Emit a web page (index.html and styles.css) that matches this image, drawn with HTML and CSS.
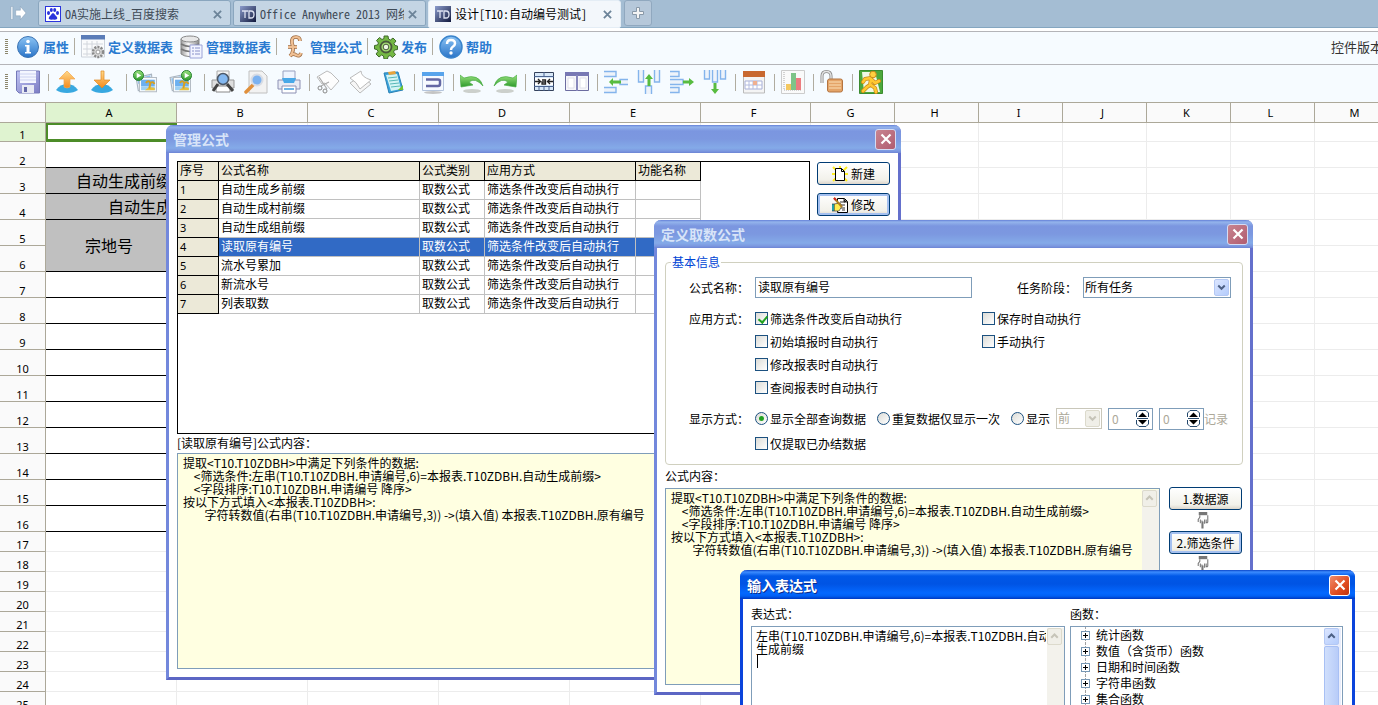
FILE: index.html
```html
<!DOCTYPE html>
<html lang="zh-CN">
<head>
<meta charset="utf-8">
<title>设计[T10:自动编号测试]</title>
<link rel="stylesheet" href="styles.css">
</head>
<body>
<svg class="defs" aria-hidden="true">
  <defs>
    <linearGradient id="blue" x1="0" y1="0" x2="0" y2="1"><stop offset="0" stop-color="#8cc4f4"/><stop offset="1" stop-color="#2a74c8"/></linearGradient>
    <linearGradient id="orange" x1="0" y1="0" x2="0" y2="1"><stop offset="0" stop-color="#ffd98a"/><stop offset="1" stop-color="#f58a1c"/></linearGradient>
    <linearGradient id="green" x1="0" y1="0" x2="0" y2="1"><stop offset="0" stop-color="#9ae27e"/><stop offset="1" stop-color="#2c9a2c"/></linearGradient>
    <linearGradient id="grey" x1="0" y1="0" x2="1" y2="0"><stop offset="0" stop-color="#9a9a9a"/><stop offset=".4" stop-color="#fafafa"/><stop offset="1" stop-color="#8a8a8a"/></linearGradient>
    <linearGradient id="violet" x1="0" y1="0" x2="1" y2="1"><stop offset="0" stop-color="#c0c4f2"/><stop offset="1" stop-color="#7c7cc4"/></linearGradient>
    <linearGradient id="navy" x1="0" y1="0" x2="1" y2="1"><stop offset="0" stop-color="#8c9ccc"/><stop offset="1" stop-color="#10183c"/></linearGradient>
  </defs>
  <symbol id="td" viewBox="0 0 16 16"><rect width="16" height="16" fill="url(#navy)"/><path d="M2 5h6M5 5v7M9 5v7h2q3 0 3-3.500t-3-3.500z" fill="none" stroke="#dde2f2" stroke-width="1.300"/></symbol>
  <symbol id="photo" viewBox="0 0 20 18"><path d="M1 4L15 1l1 12-13 3z" fill="#eef2f6" stroke="#a8b4c0"/><path d="M2 5l12-3v8H3z" fill="#8cc0f0"/><path d="M4 4h15.500v13H4z" fill="#fafcfe" stroke="#b4bcc4"/><path d="M5.500 6h12.500v6H5.500z" fill="#6cb0f0"/><path d="M5.500 12h12.500v3.500H5.500z" fill="#9cd0f4"/><path d="M9 15.500q4-4 9-2v2z" fill="#e8c040"/><path d="M13 14l1-5M10 9q2-3 4 0 3-2 3.500 1" fill="none" stroke="#d8a020" stroke-width="1.800"/></symbol>
  <symbol id="play" viewBox="0 0 12 12"><circle cx="6" cy="6" r="5.500" fill="url(#green)" stroke="#1c7c28"/><path d="M4 3l5 3-5 3z" fill="#fff"/></symbol>
  <symbol id="hand" viewBox="0 0 10 16"><path d="M1 0h8v3H1z" fill="#777"/><path d="M2 3v2L.500 7v2.500M2.500 7v3.500M4 8v7h1V9M6.500 7v4M8 7v3.500M9.500 3v6.500l-1 1" fill="none" stroke="#777"/></symbol>
</svg>

<header class="tabbar">
  <button class="pin" aria-label="展开"><svg viewBox="0 0 18 14"><path d="M1 0h2v14H1zM6 4h5V0l6 7-6 7v-4H6z" fill="#fff" stroke="#88a2ba" stroke-width=".600"/></svg></button>
  <div class="tab">
    <svg class="fav" viewBox="0 0 16 16"><path fill="#2a34dc" d="M0 0h16v16H0z"/><path fill="#fff" d="M1 1h14v14H1z"/><g fill="#2a34dc"><ellipse cx="3.500" cy="7" rx="1.500" ry="2"/><ellipse cx="6.300" cy="4" rx="1.500" ry="2"/><ellipse cx="9.700" cy="4" rx="1.500" ry="2"/><ellipse cx="12.500" cy="7" rx="1.500" ry="2"/><path d="M8 7q1 0 2.500 2.500 2.500 2 1.500 3.500-1.500 1-4 .500-2.500.500-4-.500-1-1.500 1.500-3.500Q7 7 8 7"/></g></svg>
    <span class="caption">OA实施上线_百度搜索</span><button class="tabx" aria-label="关闭"><svg viewBox="0 0 10 10"><path d="M1 1l8 8M9 1l-8 8"/></svg></button>
  </div>
  <div class="tab">
    <svg class="fav"><use href="#td"/></svg>
    <span class="caption">Office Anywhere 2013 网络</span><button class="tabx" aria-label="关闭"><svg viewBox="0 0 10 10"><path d="M1 1l8 8M9 1l-8 8"/></svg></button>
  </div>
  <div class="tab active">
    <svg class="fav"><use href="#td"/></svg>
    <span class="caption">设计[T10:自动编号测试]</span><button class="tabx" aria-label="关闭"><svg viewBox="0 0 10 10"><path d="M1 1l8 8M9 1l-8 8"/></svg></button>
  </div>
  <button class="newtab" aria-label="新标签"><svg viewBox="0 0 12 12"><path d="M4.500.500h3v4h4v3h-4v4h-3v-4h-4v-3h4z" fill="#f4f4f4" stroke="#8898a8"/></svg></button>
</header>

<nav class="menu">
  <i class="grip"></i>
  <button class="item"><svg viewBox="0 0 24 24"><circle cx="12" cy="12" r="10.500" fill="url(#blue)" stroke="#3c74b4"/><circle cx="12" cy="6.500" r="1.800" fill="#fff"/><path d="M9 10h4.500v7H15v1.500H9V17h1.500v-5.500H9z" fill="#fff"/></svg>属性</button>
  <i class="sep"></i>
  <button class="item"><svg viewBox="0 0 24 24"><path d="M.500 1h23v21H.500z" fill="#fafbfc" stroke="#ccd2da"/><path d="M0 0h24v4.500H0z" fill="#5a7cb8"/><path d="M2 9h20M2 14h20M2 19h20M6 6v15M11 6v15M16 6v15" stroke="#d2d6dc"/><circle cx="17" cy="17" r="5" fill="#d8d8d8" stroke="#8a8a8a" stroke-dasharray="2 1.200" stroke-width="2.500"/><circle cx="17" cy="17" r="2" fill="#fff" stroke="#999"/></svg>定义数据表</button>
  <button class="item wide"><svg viewBox="0 0 24 24"><path d="M2 4v15q7 5 18 0V4z" fill="url(#grey)" stroke="#888"/><ellipse cx="11" cy="4" rx="9" ry="3" fill="#e8e8e8" stroke="#888"/><path d="M2 9q9 5 18 0M2 14q9 5 18 0" fill="none" stroke="#777" stroke-width="1.500"/><path d="M11 10h12v13H11z" fill="#f2f4ff" stroke="#9ca4d8"/><path d="M13 13h2m1 0h5M13 16h2m1 0h5M13 19h2m1 0h5" stroke="#8890c8"/></svg>管理数据表</button>
  <i class="sep"></i>
  <button class="item"><svg viewBox="0 0 24 24"><path d="M17 6q0-4-4-4-5 0-4 6 3 8-2 13 3-3 6-1 4 2 5-2M5 12h9" fill="none" stroke="#9c6a40" stroke-width="3.600"/><path d="M17 6q0-4-4-4-5 0-4 6 3 8-2 13 3-3 6-1 4 2 5-2M5 12h9" fill="none" stroke="#f0c094" stroke-width="2.200"/></svg>管理公式</button>
  <i class="sep"></i>
  <button class="item"><svg viewBox="0 0 24 24"><path d="M10 1h4l.500 3 2 1L19 3l3 3-2 2.500 1 2 2.500.500v3.500l-3 .500-1 2 2 2.500-3 3-2.500-2-2 1-.500 2.500h-3.500l-.500-3-2-1L5 22l-3-3 2-2.500-1-2-2.500-.500v-3.500l3-.500 1-2-2-2.500 3-3 2.500 2 2-1z" fill="#74b844" stroke="#406a2c"/><circle cx="12" cy="12" r="5.500" fill="#a4dc74" stroke="#4a5a3c" stroke-width="1.800"/><circle cx="12" cy="12" r="2.800" fill="#eef8e4" stroke="#4a5a3c"/></svg>发布</button>
  <i class="sep"></i>
  <button class="item"><svg viewBox="0 0 24 24"><circle cx="12" cy="12" r="11" fill="url(#blue)" stroke="#3a84cc" stroke-width="1.500"/><path d="M8 9q0-4 4-4t4 3.500q0 2-2.500 3.500-1.500 1-1.500 3" fill="none" stroke="#fff" stroke-width="2.500"/><circle cx="12" cy="18" r="1.700" fill="#fff"/></svg>帮助</button>
  <span class="version">控件版本</span>
</nav>

<nav class="tools">
  <i class="grip"></i>
  <button class="tool" aria-label="保存"><svg viewBox="0 0 24 24"><path d="M.500 1h23v22H3L.500 20.500z" fill="url(#violet)" stroke="#7478b8"/><path d="M4 1h16v12H4z" fill="#f4f6ff"/><path d="M4 4h16M4 7h16M4 10h16" stroke="#ccd2f0"/><path d="M6 15h12v8H6z" fill="#e8eaf4"/><path d="M8 17h3v5H8z" fill="#6468a8"/></svg></button>
  <i class="sep"></i>
  <button class="tool broad" aria-label="上传"><svg viewBox="0 0 24 24"><path d="M1 20q4-6 11-6t11 6q-4 3-11 3T1 20" fill="#38a8e0"/><path d="M12 1l8 8h-5v8q-3 2-6 0V9H4z" fill="url(#orange)" stroke="#f0a850" stroke-width=".700"/></svg></button>
  <button class="tool broad" aria-label="下载"><svg viewBox="0 0 24 24"><path d="M1 20q4-6 11-6t11 6q-4 3-11 3T1 20" fill="#38a8e0"/><path d="M11 1h3v9h6l-8 8-8-8h7z" fill="url(#orange)" stroke="#e08a20" stroke-width=".700"/></svg></button>
  <i class="sep"></i>
  <button class="tool broad" aria-label="导入图片"><svg viewBox="0 0 24 24"><use href="#photo" x="2" y="3" width="22" height="20"/><use href="#play" x="0" y="0" width="11" height="11"/></svg></button>
  <button class="tool broad" aria-label="导出图片"><svg viewBox="0 0 24 24"><use href="#photo" x="1" y="3" width="22" height="20"/><use href="#play" x="13" y="0" width="11" height="11"/></svg></button>
  <i class="sep"></i>
  <button class="tool" aria-label="打印预览"><svg viewBox="0 0 24 24"><path d="M6 1h12v9H6z" fill="#f4f4f4" stroke="#aaa"/><path d="M1 10h22v8H1z" fill="#dedede" stroke="#999"/><path d="M5 16h14v6H5z" fill="#fff" stroke="#888"/><path d="M7 14l-5 7M16 14l6 7" stroke="#444" stroke-width="3"/><circle cx="12" cy="9" r="5.500" fill="#84b8f0" stroke="#4c5868" stroke-width="1.500"/></svg></button>
  <button class="tool" aria-label="预览"><svg viewBox="0 0 24 24"><path d="M5 1h13l5 5v17H5z" fill="#f2f2f2" stroke="#c0c0c0"/><path d="M10 14l-8 8" stroke="#e0903c" stroke-width="3.500" stroke-linecap="round"/><circle cx="13" cy="10" r="5.500" fill="#7cb2f0" stroke="#d8dce4" stroke-width="2"/></svg></button>
  <button class="tool" aria-label="打印"><svg viewBox="0 0 24 24"><path d="M6 1h12v9H6z" fill="#eef4ff" stroke="#98a0c0"/><path d="M1 10h22v9H1z" fill="#e8eaf4" stroke="#8c90b4"/><path d="M5 8h14l-2 5H7z" fill="#48a8e8"/><path d="M5 16h14v7H5z" fill="#fff" stroke="#8c90b4"/><path d="M7 19h10" stroke="#6ab4e8" stroke-width="2"/></svg></button>
  <i class="sep"></i>
  <button class="tool" aria-label="剪切"><svg viewBox="0 0 24 24"><path d="M1 7l10-6 4 2 8 8-8 9-6-7-3 1z" fill="#fdfdfd" stroke="#bbb"/><path d="M3 7l8 12M13 12l-8 4" stroke="#aaa" stroke-width="1.200"/><circle cx="4" cy="18" r="2" fill="none" stroke="#888"/><circle cx="9" cy="21" r="2" fill="none" stroke="#888"/></svg></button>
  <button class="tool" aria-label="复制"><svg viewBox="0 0 24 24"><path d="M1 13l11-7 10 8-11 9z" fill="#f6f6f6" stroke="#bbb"/><path d="M1 8l11-7q0 6 10 9l-11 9Q8 12 1 8" fill="#fff" stroke="#bbb"/></svg></button>
  <button class="tool" aria-label="粘贴"><svg viewBox="0 0 24 24"><path d="M2 3l14-1 5 18-14 3z" fill="#3ca4dc" stroke="#2880b4"/><path d="M4 5l11-1 4 15-10 2z" fill="#d4f4f4"/><path d="M6 8l9-1M7 11l9-1M8 14l9-1M9 17l9-1" stroke="#58b8b8"/><path d="M6 2l7-1 1 3-7 1z" fill="#e8a43c"/><path d="M16 20h5v-5z" fill="#70c430"/></svg></button>
  <i class="sep"></i>
  <button class="tool" aria-label="对象"><svg viewBox="0 0 24 24"><ellipse cx="12" cy="22.500" rx="9" ry="1.500" fill="#c4c4c4"/><path d="M1.500 2.500h21v18h-21z" fill="#f6faff" stroke="#b4c4dc"/><path d="M1 2h22v4H1z" fill="#58a4ec"/><path d="M5 9.500h12q2 0 2 1.500v3q0 2-2 2H5" fill="none" stroke="#6468a4" stroke-width="2.500"/></svg></button>
  <i class="sep"></i>
  <button class="tool" aria-label="撤销"><svg viewBox="0 0 24 24"><ellipse cx="12" cy="21" rx="9" ry="2" fill="#ccd0cc"/><path d="M0 5l1 12 12-2-4-3q6-5 14 4Q19 3 4 8z" fill="url(#green)" stroke="#4cae48" stroke-width=".700"/></svg></button>
  <button class="tool" aria-label="重做"><svg viewBox="0 0 24 24"><ellipse cx="12" cy="21" rx="9" ry="2" fill="#ccd0cc"/><path d="M24 5l-1 12-12-2 4-3Q9 7 1 16 5 3 20 8z" fill="url(#green)" stroke="#4cae48" stroke-width=".700"/></svg></button>
  <i class="sep"></i>
  <button class="tool" aria-label="合并单元格"><svg viewBox="0 0 24 24"><path d="M2.500 2.500h19v18h-19z" fill="#d8e8f8" stroke="#35425c"/><path d="M2 6.500h20M2 16.500h20M12 2v4M12 17v4M7 17v4M17 17v4" stroke="#4c6490"/><path d="M3 8h18v7H3z" fill="#fff"/><path d="M3 11.500h5M6 9l2.500 2.500L6 14M21 11.500h-5M18 9l-2.500 2.500L18 14M10 10h3.500v4h-3.500v-2h3" fill="none" stroke="#222" stroke-width="1.300"/></svg></button>
  <button class="tool" aria-label="拆分单元格"><svg viewBox="0 0 24 24"><path d="M.500 2.500h23v18H.500z" fill="#f6f6fa" stroke="#6c6ca0"/><path d="M0 2h24v4H0z" fill="#7878b4"/><path d="M11 5h2v16h-2z" fill="#8888bc"/><path d="M3 8h6v10H3zM15 8h6v10h-6z" fill="#fff" stroke="#e0e0ea"/></svg></button>
  <i class="sep"></i>
  <button class="tool" aria-label="插入行"><svg viewBox="0 0 24 24"><g fill="#eef3fa" stroke="#84b4ec" stroke-width="1.400"><path d="M0 1.500h12v5H0M0 17.500h12v5H0M24 9.500h-8v5h8"/></g><path d="M5 12l4-4v2.500h8v3H9V16z" fill="#58bc40"/></svg></button>
  <button class="tool" aria-label="插入列"><svg viewBox="0 0 24 24"><g fill="#eef3fa" stroke="#84b4ec" stroke-width="1.400"><path d="M1.500 0v12h5V0M17.500 0v12h5V0M8.500 24v-8h6v8"/></g><path d="M12 4l4 5h-2.500v7h-3V9H8z" fill="#58bc40"/></svg></button>
  <button class="tool" aria-label="删除行"><svg viewBox="0 0 24 24"><g fill="#eef3fa" stroke="#84b4ec" stroke-width="1.400"><path d="M0 1.500h9v5H0M0 17.500h9v5H0M0 9.500h13v5H0"/></g><path d="M24 12l-5-4v2.500h-6v3h6V16z" fill="#58bc40"/></svg></button>
  <button class="tool" aria-label="删除列"><svg viewBox="0 0 24 24"><g fill="#eef3fa" stroke="#84b4ec" stroke-width="1.400"><path d="M1.500 0v9h5V0M17.500 0v9h5V0M9.500 0v12h5V0"/></g><path d="M12 24l4-5h-2.500v-6h-3v6H8z" fill="#58bc40"/></svg></button>
  <i class="sep"></i>
  <button class="tool" aria-label="日历"><svg viewBox="0 0 24 24"><path d="M1.500 2h21v21h-21z" fill="#f4f4f4" stroke="#bbb"/><path d="M1 1h22v6H1z" fill="#c86830"/><path d="M3 11h17v8H3z" fill="#fff" stroke="#a8b0d8"/><path d="M3 15h17M7 11v8M11 11v8M15 11v8" stroke="#b4bce0"/><path d="M11 11h4v4h-4z" fill="#f0b090"/></svg></button>
  <i class="sep"></i>
  <button class="tool" aria-label="图表"><svg viewBox="0 0 24 24"><path d="M.500.500h23v23H.500z" fill="#fafafa" stroke="#ccc"/><path d="M3 2v18h18" fill="none" stroke="#aaa" stroke-dasharray="1 1"/><path d="M5 14h5v6H5z" fill="#f4c860"/><path d="M10 3h5v17h-5z" fill="#7ec488"/><path d="M15 8h5v12h-5z" fill="#ec7c80"/></svg></button>
  <i class="sep"></i>
  <button class="tool" aria-label="解锁"><svg viewBox="0 0 24 24"><path d="M2 13V6q0-4.500 4.500-4.500T11 6v4" fill="none" stroke="#888" stroke-width="3"/><path d="M2 13V6q0-4.500 4.500-4.500T11 6v4" fill="none" stroke="#e4e4e4" stroke-width="1.400"/><rect x="7.500" y="9" width="15" height="13" rx="2" fill="#e4a468" stroke="#b47440"/><path d="M9 12h12M9 15h12M9 18h12" stroke="#f4cc9c" stroke-width="1.400"/></svg></button>
  <i class="sep"></i>
  <button class="tool" aria-label="运行"><svg viewBox="0 0 24 24"><path d="M.500.500h23v23H.500z" fill="#4ca83c" stroke="#3c8c30"/><path d="M3 2h13l5 20H5z" fill="#f0f8e4"/><g fill="none" stroke-linecap="round" stroke-linejoin="round"><path d="M12 8L6 9l-2 3M12 9l-1 6-3 2-4 4M12 15l4 3 1 4M13 10l3 3 4-2" stroke="#c88818" stroke-width="4"/><path d="M12 8L6 9l-2 3M12 9l-1 6-3 2-4 4M12 15l4 3 1 4M13 10l3 3 4-2" stroke="#ffc830" stroke-width="2.600"/></g><circle cx="14" cy="4.500" r="3.300" fill="#ffd040" stroke="#c88818"/></svg></button>
</nav>

<main class="sheet">
<table class="grid">
<colgroup><col class="c0"><col class="ca" span="5"><col class="cf"><col class="cg" span="7"></colgroup>
<thead><tr><th></th><th class="on">A</th><th>B</th><th>C</th><th>D</th><th>E</th><th>F</th><th>G</th><th>H</th><th>I</th><th>J</th><th>K</th><th>L</th><th>M</th></tr></thead>
<tbody>
<tr class="first"><th class="on">1</th><td class="cursor"></td><td></td><td></td><td></td><td></td><td></td><td></td><td></td><td></td><td></td><td></td><td></td><td></td></tr>
<tr><th>2</th><td class="ln"></td><td></td><td></td><td></td><td></td><td></td><td></td><td></td><td></td><td></td><td></td><td></td><td></td></tr>
<tr><th>3</th><td class="ln fill t1" colspan="2">自动生成前缀</td><td></td><td></td><td></td><td></td><td></td><td></td><td></td><td></td><td></td><td></td><td></td></tr>
<tr><th>4</th><td class="ln fill t2" colspan="2">自动生成</td><td></td><td></td><td></td><td></td><td></td><td></td><td></td><td></td><td></td><td></td><td></td></tr>
<tr><th>5</th><td class="ln fill" rowspan="2">宗地号</td><td></td><td></td><td></td><td></td><td></td><td></td><td></td><td></td><td></td><td></td><td></td><td></td></tr>
<tr><th>6</th><td></td><td></td><td></td><td></td><td></td><td></td><td></td><td></td><td></td><td></td><td></td><td></td></tr>
<tr><th>7</th><td class="ln"></td><td></td><td></td><td></td><td></td><td></td><td></td><td></td><td></td><td></td><td></td><td></td><td></td></tr>
<tr><th>8</th><td class="ln"></td><td></td><td></td><td></td><td></td><td></td><td></td><td></td><td></td><td></td><td></td><td></td><td></td></tr>
<tr><th>9</th><td class="ln"></td><td></td><td></td><td></td><td></td><td></td><td></td><td></td><td></td><td></td><td></td><td></td><td></td></tr>
<tr><th>10</th><td class="ln"></td><td></td><td></td><td></td><td></td><td></td><td></td><td></td><td></td><td></td><td></td><td></td><td></td></tr>
<tr><th>11</th><td class="ln"></td><td></td><td></td><td></td><td></td><td></td><td></td><td></td><td></td><td></td><td></td><td></td><td></td></tr>
<tr><th>12</th><td class="ln"></td><td></td><td></td><td></td><td></td><td></td><td></td><td></td><td></td><td></td><td></td><td></td><td></td></tr>
<tr><th>13</th><td class="ln"></td><td></td><td></td><td></td><td></td><td></td><td></td><td></td><td></td><td></td><td></td><td></td><td></td></tr>
<tr><th>14</th><td class="ln"></td><td></td><td></td><td></td><td></td><td></td><td></td><td></td><td></td><td></td><td></td><td></td><td></td></tr>
<tr><th>15</th><td class="ln"></td><td></td><td></td><td></td><td></td><td></td><td></td><td></td><td></td><td></td><td></td><td></td><td></td></tr>
<tr><th>16</th><td class="ln"></td><td></td><td></td><td></td><td></td><td></td><td></td><td></td><td></td><td></td><td></td><td></td><td></td></tr>
<tr class="low"><th>17</th><td></td><td></td><td></td><td></td><td></td><td></td><td></td><td></td><td></td><td></td><td></td><td></td><td></td></tr>
<tr class="low"><th>18</th><td></td><td></td><td></td><td></td><td></td><td></td><td></td><td></td><td></td><td></td><td></td><td></td><td></td></tr>
<tr class="low"><th>19</th><td></td><td></td><td></td><td></td><td></td><td></td><td></td><td></td><td></td><td></td><td></td><td></td><td></td></tr>
<tr class="low"><th>20</th><td></td><td></td><td></td><td></td><td></td><td></td><td></td><td></td><td></td><td></td><td></td><td></td><td></td></tr>
<tr class="low"><th>21</th><td></td><td></td><td></td><td></td><td></td><td></td><td></td><td></td><td></td><td></td><td></td><td></td><td></td></tr>
<tr class="low"><th>22</th><td></td><td></td><td></td><td></td><td></td><td></td><td></td><td></td><td></td><td></td><td></td><td></td><td></td></tr>
<tr class="low"><th>23</th><td></td><td></td><td></td><td></td><td></td><td></td><td></td><td></td><td></td><td></td><td></td><td></td><td></td></tr>
<tr class="low"><th>24</th><td></td><td></td><td></td><td></td><td></td><td></td><td></td><td></td><td></td><td></td><td></td><td></td><td></td></tr>
<tr class="low"><th>25</th><td></td><td></td><td></td><td></td><td></td><td></td><td></td><td></td><td></td><td></td><td></td><td></td><td></td></tr>
</tbody>
</table>
</main>

<section class="win win-manage">
  <header class="title"><h2>管理公式</h2><button class="close" aria-label="关闭"><svg viewBox="0 0 12 12"><path d="M1.500 1.500l9 9M10.500 1.500l-9 9"/></svg></button></header>
  <div class="body manage">
    <div class="row">
      <div class="list">
        <table class="formulas">
          <thead><tr><th class="n">序号</th><th class="name">公式名称</th><th class="kind">公式类别</th><th class="mode">应用方式</th><th class="fn">功能名称</th></tr></thead>
          <tbody>
          <tr><th>1</th><td>自动生成乡前缀</td><td>取数公式</td><td>筛选条件改变后自动执行</td><td></td></tr>
          <tr><th>2</th><td>自动生成村前缀</td><td>取数公式</td><td>筛选条件改变后自动执行</td><td></td></tr>
          <tr><th>3</th><td>自动生成组前缀</td><td>取数公式</td><td>筛选条件改变后自动执行</td><td></td></tr>
          <tr class="sel"><th>4</th><td>读取原有编号</td><td>取数公式</td><td>筛选条件改变后自动执行</td><td></td></tr>
          <tr><th>5</th><td>流水号累加</td><td>取数公式</td><td>筛选条件改变后自动执行</td><td></td></tr>
          <tr><th>6</th><td>新流水号</td><td>取数公式</td><td>筛选条件改变后自动执行</td><td></td></tr>
          <tr><th>7</th><td>列表取数</td><td>取数公式</td><td>筛选条件改变后自动执行</td><td></td></tr>
          </tbody>
        </table>
      </div>
      <div class="side">
        <button class="btn"><svg viewBox="0 0 16 16"><path d="M8 8L1 1M8 8V0M8 8l7-7M8 8H0M8 8h8M8 8l-7 7M8 8l7 7" stroke="#ffee20" stroke-width="2"/><path d="M3.500 2.500h6l3 3v9h-9z" fill="#fff" stroke="#000"/><path d="M9.500 2.500v3h3" fill="none" stroke="#000"/></svg>新建</button>
        <button class="btn focus"><svg viewBox="0 0 16 16"><path d="M5.500 1.500h7l3 3v11h-10z" fill="#fff" stroke="#000"/><path d="M8 5h5M8 8h5M9 11h4M10 13h3M12 2v3h3" stroke="#333"/><path d="M2 7l6-1 2 3-3 5H2z" fill="#ffee50" stroke="#555" stroke-width=".800"/><path d="M0 7h2v7H0z" fill="#20d8e8" stroke="#222" stroke-width=".600"/><path d="M2 1l8 9" stroke="#b08020" stroke-width="2"/><path d="M2 1l2 2" stroke="#d02020" stroke-width="2"/></svg>修改</button>
      </div>
    </div>
    <label class="lbl" for="content1">[读取原有编号]公式内容：</label>
    <textarea id="content1" class="code cream" readonly>提取&lt;T10.T10ZDBH&gt;中满足下列条件的数据:
    &lt;筛选条件:左串(T10.T10ZDBH.申请编号,6)=本报表.T10ZDBH.自动生成前缀&gt;
    &lt;字段排序:T10.T10ZDBH.申请编号 降序&gt;
按以下方式填入&lt;本报表.T10ZDBH&gt;:
        字符转数值(右串(T10.T10ZDBH.申请编号,3)) -&gt;(填入值) 本报表.T10ZDBH.原有编号</textarea>
  </div>
</section>

<section class="win win-define">
  <header class="title"><h2>定义取数公式</h2><button class="close" aria-label="关闭"><svg viewBox="0 0 12 12"><path d="M1.500 1.500l9 9M10.500 1.500l-9 9"/></svg></button></header>
  <div class="body define">
    <fieldset>
      <legend>基本信息</legend>
      <div class="frow">
        <label class="flabel" for="fname">公式名称：</label><input class="text" id="fname" value="读取原有编号">
        <label class="flabel stage" for="stage">任务阶段：</label>
        <span class="combo"><select id="stage"><option>所有任务</option></select><svg class="drop" viewBox="0 0 16 18"><path d="M4 6.500l4 4 4-4"/></svg></span>
      </div>
      <div class="frow modes">
        <span class="flabel">应用方式：</span>
        <div class="checks">
          <label><input type="checkbox" checked>筛选条件改变后自动执行</label>
          <label><input type="checkbox">初始填报时自动执行</label>
          <label><input type="checkbox">修改报表时自动执行</label>
          <label><input type="checkbox">查阅报表时自动执行</label>
        </div>
        <div class="checks">
          <label><input type="checkbox">保存时自动执行</label>
          <label><input type="checkbox">手动执行</label>
        </div>
      </div>
      <div class="frow shows">
        <span class="flabel">显示方式：</span>
        <label><input type="radio" name="show" checked>显示全部查询数据</label>
        <label><input type="radio" name="show">重复数据仅显示一次</label>
        <label><input type="radio" name="show">显示</label>
        <span class="combo off"><select disabled aria-label="位置"><option>前</option></select><svg class="drop" viewBox="0 0 16 18"><path d="M4 6.500l4 4 4-4"/></svg></span>
        <span class="spin"><input value="0" disabled aria-label="起始"><svg viewBox="0 0 13 17"><path d="M.500 7V3L3 .500h7L12.500 3v4M.500 10v4L3 16.500h7l2.500-2.500v-4M1 8.500h11" fill="none" stroke="#24486c"/><path d="M2 7l4.500-4.500L11 7zM2 10h9l-4.500 4.500z"/></svg></span>
        <span class="spin"><input value="0" disabled aria-label="数量"><svg viewBox="0 0 13 17"><path d="M.500 7V3L3 .500h7L12.500 3v4M.500 10v4L3 16.500h7l2.500-2.500v-4M1 8.500h11" fill="none" stroke="#24486c"/><path d="M2 7l4.500-4.500L11 7zM2 10h9l-4.500 4.500z"/></svg></span>
        <span class="unit">记录</span>
      </div>
      <div class="frow only">
        <span class="flabel"></span>
        <label><input type="checkbox">仅提取已办结数据</label>
      </div>
    </fieldset>
    <label class="lbl tall" for="content2">公式内容：</label>
    <div class="row stretch">
      <div class="box cream">
        <textarea id="content2" class="code" readonly>提取&lt;T10.T10ZDBH&gt;中满足下列条件的数据:
    &lt;筛选条件:左串(T10.T10ZDBH.申请编号,6)=本报表.T10ZDBH.自动生成前缀&gt;
    &lt;字段排序:T10.T10ZDBH.申请编号 降序&gt;
按以下方式填入&lt;本报表.T10ZDBH&gt;:
        字符转数值(右串(T10.T10ZDBH.申请编号,3)) -&gt;(填入值) 本报表.T10ZDBH.原有编号</textarea>
        <div class="bar off"><svg class="arrow" viewBox="0 0 16 18"><path d="M4 10.500l4-4 4 4"/></svg></div>
      </div>
      <div class="steps">
        <button class="btn">1.数据源</button>
        <svg class="hand"><use href="#hand"/></svg>
        <button class="btn focus">2.筛选条件</button>
        <svg class="hand"><use href="#hand"/></svg>
      </div>
    </div>
  </div>
</section>

<section class="win win-expr live">
  <header class="title"><h2>输入表达式</h2><button class="close" aria-label="关闭"><svg viewBox="0 0 12 12"><path d="M1.500 1.500l9 9M10.500 1.500l-9 9"/></svg></button></header>
  <div class="body expr">
    <div class="pane">
      <label class="lbl tall" for="expr">表达式：</label>
      <div class="box">
        <textarea id="expr" class="code">左串(T10.T10ZDBH.申请编号,6)=本报表.T10ZDBH.自动
生成前缀</textarea>
        <i class="caret"></i>
        <div class="bar off"><svg class="arrow" viewBox="0 0 16 18"><path d="M4 10.500l4-4 4 4"/></svg></div>
      </div>
    </div>
    <div class="pane funcs">
      <span class="lbl tall">函数：</span>
      <div class="box">
        <ul class="tree">
          <li><button class="plus" aria-label="展开"></button>统计函数</li>
          <li><button class="plus" aria-label="展开"></button>数值（含货币）函数</li>
          <li><button class="plus" aria-label="展开"></button>日期和时间函数</li>
          <li><button class="plus" aria-label="展开"></button>字符串函数</li>
          <li><button class="plus" aria-label="展开"></button>集合函数</li>
        </ul>
        <div class="bar"><svg class="arrow" viewBox="0 0 16 18"><path d="M4 10.500l4-4 4 4"/></svg><i class="thumb"></i></div>
      </div>
    </div>
  </div>
</section>
</body>
</html>
```
FILE: styles.css
```css
* { box-sizing: border-box; }
body {
  margin: 0;
  height: 100vh;
  display: flex;
  flex-direction: column;
  position: relative;
  overflow: hidden;
  background: #fff;
  color: #000;
  font: 12px/14px "Noto Sans CJK SC", sans-serif;
}
button, input, select, textarea { font: inherit; color: inherit; margin: 0; padding: 0; border: 0; background: none; }
button { display: flex; align-items: center; justify-content: center; }
svg { display: block; flex: none; }
.defs { position: absolute; width: 0; height: 0; }

/* browser tabs */
.tabbar {
  flex: none;
  height: 28px;
  display: flex;
  align-items: stretch;
  padding: 0 0 1px 10px;
  background: #a4bdd3;
  border-bottom: 1px solid #84a6c0;
  font-family: "Noto Sans Mono CJK SC", "Noto Sans CJK SC", monospace;
}
.pin { width: 28px; justify-content: flex-start; }
.pin svg { width: 17px; height: 14px; }
.tab {
  width: 193px;
  margin-right: 2px;
  display: flex;
  align-items: center;
  gap: 4px;
  padding: 2px 8px 0 6px;
  border: 1px solid #8aa6be;
  border-radius: 3px 3px 2px 2px;
  background: #c4d5e4;
  color: #3e4a56;
}
.tab.active { background: #f3f7fb; color: #000; margin-bottom: -2px; padding-bottom: 2px; border-color: #e4edf5; }
.fav { width: 16px; height: 16px; }
.caption { flex: 1; overflow: hidden; white-space: nowrap; }
.tabx svg { width: 9px; height: 9px; stroke: #6c8499; stroke-width: 2; }
.newtab { width: 28px; margin-left: 1px; background: #b6c8da; border: 1px solid #90a8bf; border-radius: 3px; }
.newtab svg { width: 12px; height: 12px; }

/* toolbars */
.menu, .tools { flex: none; display: flex; align-items: center; background: #f6fbff; padding: 0 0 3px 5px; }
.menu { height: 33px; margin-top: 3px; border-top: 1px solid #b4b4b8; }
.tools { height: 38px; border-top: 1px solid #b4b4b8; }
.grip { width: 3px; height: 16px; margin-right: 8px; background: repeating-linear-gradient(#8c866c 0 1px, #f6fbff 1px 2px); }
.sep { width: 1px; height: 17px; margin-right: 6px; background: #b0aca0; }
.item { gap: 3px; margin-right: 5px; color: #2a7ad0; font-weight: bold; font-size: 13px; white-space: nowrap; }
.item.wide { margin-left: 1px; }
.item svg, .tool svg { width: 24px; height: 24px; }
.tool { width: 33px; justify-content: flex-start; }
.tool.broad { width: 35px; }
.tool:has(+ .sep) { width: 32px; }
.tool.broad:has(+ .sep) { width: 36px; }
.version { flex: 1; text-align: right; font-size: 13px; color: #333; white-space: nowrap; margin-right: -5px; }

/* spreadsheet */
.sheet { flex: 1; overflow: hidden; }
.grid { table-layout: fixed; width: 1399px; border-collapse: separate; border-spacing: 0; }
.c0 { width: 46px; }
.ca { width: 131px; }
.cf { width: 110px; }
.cg { width: 84px; }
.grid th, .grid td { height: 26px; padding: 0; border: solid #ececec; border-width: 0 1px 1px 0; }
.grid th { background: #fafafa; border-color: #aca899; font-weight: normal; vertical-align: bottom; }
.grid th, .formulas tbody th { font-family: "Noto Sans", sans-serif; font-size: 11px; line-height: 13px; }
.grid thead th { height: 21px; padding-right: 4px; border-top: 1px solid #aca899; vertical-align: middle; }
.grid th.on { background: #dff3d0; }
.grid .first > * { height: 19px; }
.grid .low > * { height: 20px; }
.grid .cursor { border: solid #4c8c28; border-width: 2px 3px 3px 2px; }
.grid .ln { border-bottom-color: #000; }
.grid .fill { background: #c0c0c0; text-align: center; font-size: 16px; line-height: 18px; padding: 0 4px 2px 0; }
.grid .t1 { text-align: left; padding-left: 30px; }
.grid .t2 { text-align: left; padding-left: 62px; }

/* windows */
.win {
  position: absolute;
  display: flex;
  flex-direction: column;
  border: solid #7388dc;
  border-width: 0 3px 3px;
  border-right-color: #6470cc;
  border-bottom-color: #5c66c4;
  border-radius: 7px 7px 0 0;
  background: #fff;
}
.win-manage { left: 166px; top: 125px; width: 735px; height: 555px; }
.win-define { left: 654px; top: 220px; width: 599px; height: 475px; }
.win-expr { left: 740px; top: 570px; bottom: -40px; width: 615px; }
.win.live { border-color: #0a44dc; }
.title {
  height: 28px;
  flex: none;
  margin: 0 -3px;
  padding: 0 5px 0 7px;
  display: flex;
  align-items: center;
  justify-content: space-between;
  border-radius: 7px 7px 0 0;
  background: linear-gradient(#6480d8 0, #94b4ec 2px, #7b96e0 6px, #7c98e0 14px, #84aae8 23px, #7c98e0 26px, #6c84d4);
  color: #d8e4f8;
}
.title h2 { margin: 0; padding-bottom: 1px; font-size: 14px; line-height: 18px; }
.live .title { height: 29px; padding-top: 1px; background: linear-gradient(#0a44c8 0, #3c8cff 2px, #0058e8 6px, #0054e4 14px, #0468ff 23px, #0060f4 26px, #0038c0); color: #fff; }
.live h2 { text-shadow: 1px 1px #0a2c8c; }
.close { width: 21px; height: 21px; border: 1px solid #d4dcf4; border-radius: 3px; background: linear-gradient(135deg, #c88490, #b05c70); }
.live .close { border-color: #fff; background: linear-gradient(135deg, #f08c6c, #e04c20 60%, #c03410); }
.close svg { width: 12px; height: 12px; stroke: #fff; stroke-width: 2.200; }
.body { flex: 1; min-height: 0; display: flex; flex-direction: column; }
.manage { padding: 8px; }
.define { padding: 7px 7px 7px 8px; }
.row { display: flex; }
.stretch { flex: 1; min-height: 0; gap: 9px; }
.lbl { display: block; line-height: 17px; padding-bottom: 2px; }
.lbl.tall { line-height: 22px; padding-bottom: 1px; }

.list { flex: 1; height: 273px; border: 1px solid #000; }
.side { width: 80px; display: flex; flex-direction: column; align-items: flex-start; gap: 8px; padding: 1px 0 0 7px; }
.formulas { table-layout: fixed; width: 523px; border-collapse: separate; border-spacing: 0; }
.formulas th, .formulas td { height: 19px; padding: 0 0 2px 2px; border: solid #c0c0c0; border-width: 0 1px 1px 0; text-align: left; font-weight: normal; white-space: nowrap; overflow: hidden; }
.formulas th { background: #ece9d8; border-color: #000; }
.n { width: 41px; }
.name { width: 201px; }
.kind { width: 65px; }
.mode { width: 151px; }
.fn { width: 65px; }
.formulas .sel td { background: #316ac5; color: #fff; }

.btn { width: 73px; height: 23px; gap: 3px; border: 1px solid #003c74; border-radius: 3px; background: linear-gradient(#fff, #f2f1ea 80%, #dcd6cc); white-space: nowrap; }
.btn svg { width: 16px; height: 16px; }
.btn.focus { box-shadow: inset 0 0 0 2px #a4c0f0; }

.code { display: block; resize: none; overflow: hidden; outline: 0; white-space: pre; line-height: 13px; padding: 2px 5px; }
.manage .code { flex: 1; border: 1px solid #7f9db9; }
.cream { background: #ffffe1; }
.box { position: relative; flex: 1; min-width: 0; display: flex; border: 1px solid #7f9db9; }
.box .code { flex: 1; min-width: 0; }
.expr .code { padding: 2px 0 2px 4px; }
.caret { position: absolute; left: 5px; top: 28px; width: 1px; height: 13px; background: #000; }
.bar { width: 17px; margin: 1px; background: #e9edfc; display: flex; flex-direction: column; gap: 1px; }
.bar.off { background: #f3f2ec; margin-right: 0; }
.arrow, .drop { width: 15px; height: 17px; border: 1px solid #b4c8f4; border-radius: 2px; background: linear-gradient(135deg, #dce6ff, #b4ccfc); fill: none; stroke: #4d6185; stroke-width: 2.500; }
.off .arrow, .off .drop { border-color: #dcdacc; background: #f0efe8; stroke: #c6c4b8; }
.thumb { flex: 1; width: 15px; border: 1px solid #a8c0f4; border-radius: 2px; background: linear-gradient(90deg, #d0dffc, #b8ccf8); }

fieldset { margin: 0; min-width: 0; padding: 8px 11px 9px 23px; border: 1px solid #d0d0bf; border-radius: 4px; }
legend { margin-left: -18px; padding: 0 1px; color: #0046d5; }
.frow { display: flex; align-items: center; }
.frow label { white-space: nowrap; }
.flabel { width: 66px; flex: none; }
.text { flex: 1; min-width: 0; height: 21px; padding: 0 2px 2px; border: 1px solid #7f9db9; }
.stage { margin-left: 45px; }
.combo { width: 148px; height: 21px; padding: 1px; display: flex; align-items: center; border: 1px solid #7f9db9; }
.combo select { flex: 1; min-width: 0; appearance: none; padding-bottom: 1px; opacity: 1; }
.combo.off { width: 46px; margin-left: 6px; border-color: #c9c7ba; color: #aca899; }
.modes { align-items: flex-start; margin-top: 9px; }
.modes .flabel, .checks label, .only label { line-height: 23px; }
.checks { width: 227px; flex: none; }
.checks label, .only label, .shows label { display: flex; align-items: center; gap: 2px; }
.checks:last-child { width: auto; }
.shows { margin-top: 9px; height: 21px; }
.shows label + label { margin-left: 11px; }
.only { margin-top: 3px; }
input[type="checkbox"], input[type="radio"] { appearance: none; width: 13px; height: 13px; flex: none; border: 1px solid #1c5180; background: linear-gradient(135deg, #dcdcd7, #fff); position: relative; }
input[type="radio"] { border-radius: 50%; }
input[type="checkbox"]:checked::after { content: ""; position: absolute; left: 4px; top: 1px; width: 4px; height: 7px; border: solid #21a121; border-width: 0 2px 2px 0; transform: rotate(40deg); }
input[type="radio"]:checked::after { content: ""; position: absolute; left: 3px; top: 3px; width: 5px; height: 5px; border-radius: 50%; background: #21a121; }
.spin { width: 45px; height: 22px; margin-left: 6px; display: flex; align-items: center; border: 1px solid #7f9db9; padding: 0 3px; }
.spin input { flex: 1; min-width: 0; color: #aca899; }
.spin svg { width: 13px; height: 17px; }
.unit { color: #aca899; white-space: nowrap; }
.steps { width: 74px; display: flex; flex-direction: column; gap: 2px; margin-top: -1px; }
.hand { width: 12px; height: 17px; margin-left: 28px; }

.expr { flex-direction: row; gap: 5px; padding: 4px 9px 8px 8px; }
.pane { flex: 1; min-width: 0; display: flex; flex-direction: column; }
.funcs { flex: none; width: 273px; }
.tree { flex: 1; margin: 0; padding: 0 0 0 10px; list-style: none; line-height: 16px; }
.tree li { display: flex; align-items: center; gap: 6px; position: relative; }
.tree li::before { content: ""; position: absolute; left: 4px; top: 0; height: 16px; width: 10px; border-left: 1px dotted #a0a0a0; }
.plus { width: 9px; height: 9px; position: relative; border: 1px solid #7898b5; background: linear-gradient(#000, #000) center / 5px 1px no-repeat, linear-gradient(#000, #000) center / 1px 5px no-repeat, #fff; }
```
